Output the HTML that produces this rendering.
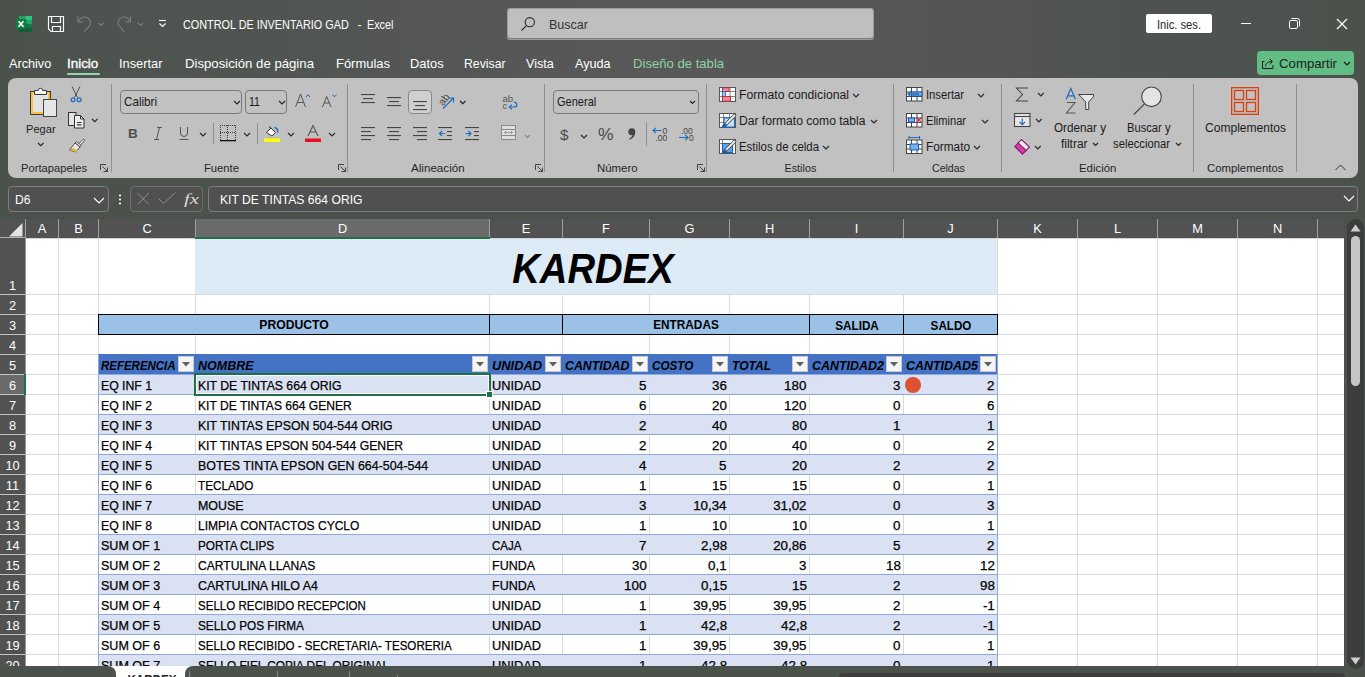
<!DOCTYPE html>
<html><head><meta charset="utf-8"><style>
html,body{margin:0;padding:0;width:1365px;height:677px;overflow:hidden;background:#4b524c;font-family:"Liberation Sans", sans-serif;}
.r{position:absolute;}
.t{position:absolute;line-height:1;white-space:pre;font-family:"Liberation Sans", sans-serif;}
svg{overflow:visible}
</style></head><body>
<div class="r" style="left:0px;top:0px;width:1365px;height:178px;background:linear-gradient(90deg,#4b524c 0%,#525653 25%,#585858 45%,#575757 60%,#4e534f 85%,#4b524c 100%);"></div><svg class="r" style="left:15px;top:15px" width="18" height="18" viewBox="0 0 18 18">
<rect x="4" y="1" width="6.5" height="4" fill="#21a366"/><rect x="10.5" y="1" width="6.5" height="4" fill="#33c481"/>
<rect x="4" y="5" width="13" height="4" fill="#21a366"/><rect x="4" y="9" width="13" height="4" fill="#107c41"/><rect x="4" y="13" width="13" height="4" fill="#185c37"/>
<rect x="1.5" y="4.5" width="10" height="10" fill="#0c5a2f" opacity="0.6"/>
<rect x="1" y="4" width="10" height="10" fill="#107c41"/>
<path d="M3.5 6.3l5 5.4M8.5 6.3l-5 5.4" stroke="#fff" stroke-width="1.6"/>
</svg><svg class="r" style="left:47px;top:15px" width="18" height="18" viewBox="0 0 18 18" fill="none" stroke="#fff" stroke-width="1.15">
<path d="M1.5 1.5H16.5V16.5H4L1.5 14z"/><path d="M4.5 1.5V7.5H13.5V1.5"/><path d="M5.5 16.5V11.5H13.5V16.5"/>
</svg><svg class="r" style="left:76px;top:15px" width="72" height="18" viewBox="0 0 72 18" fill="none" stroke="#7b807c" stroke-width="1.1">
<path d="M2 1.5v5.5h5.5"/><path d="M2.3 6.6C4 3 7 1.5 10 2.2c3.5 0.8 5.5 4.5 4 8L8 17"/>
<path d="M22.5 8l2.5 2.5 2.5-2.5"/>
<path d="M54.5 1.5v5.5h-5.5"/><path d="M54.2 6.6C52.5 3 49.5 1.5 46.5 2.2c-3.5 0.8-5.5 4.5-4 8L48.5 17"/>
<path d="M62 8l2.5 2.5 2.5-2.5"/>
</svg><svg class="r" style="left:158px;top:19px" width="10" height="9" viewBox="0 0 10 9" fill="none" stroke="#fff" stroke-width="1.1">
<path d="M1 1.5h7"/><path d="M1.5 4.5l3 3 3-3"/></svg><div class="t" style="left:183.30px;top:19.00px;font-size:12.2px;color:#fff;transform:scaleX(0.8905);transform-origin:0 0;">CONTROL DE INVENTARIO GAD</div><div class="t" style="left:357.50px;top:19.00px;font-size:12.2px;color:#fff;">-</div><div class="t" style="left:367.00px;top:19.00px;font-size:12.2px;color:#fff;transform:scaleX(0.8816);transform-origin:0 0;">Excel</div><div class="r" style="left:507px;top:8px;width:367px;height:32px;background:#bfbfbf;border-radius:4px;box-shadow:inset 0 0 0 1px #9c9c9c, inset 0 -1px 0 1px #7e7e7e;"></div><svg class="r" style="left:520px;top:16px" width="16" height="16" viewBox="0 0 16 16" fill="none" stroke="#2b2b2b" stroke-width="1.1">
<circle cx="9.8" cy="6.2" r="4.6"/><path d="M6.4 9.6L1.5 14.5"/></svg><div class="t" style="left:549.00px;top:19.00px;font-size:12.8px;color:#333;transform:scaleX(0.9790);transform-origin:0 0;">Buscar</div><div class="r" style="left:1146px;top:14px;width:66px;height:19px;background:#fff;border-radius:2px;"></div><div class="t" style="left:1179.00px;top:19.00px;font-size:12.2px;color:#1f1f1f;transform:translateX(-50%) scaleX(0.9140);transform-origin:50% 0;">Inic. ses.</div><svg class="r" style="left:1230px;top:10px" width="130" height="28" viewBox="0 0 130 28" fill="none" stroke="#fff" stroke-width="1">
<path d="M11 13.5h10"/>
<rect x="59.5" y="10.5" width="8" height="8" rx="1.3"/><path d="M61.5 8.5h5.8a2.2 2.2 0 0 1 2.2 2.2v5.8"/>
<path d="M107 9l10 10M117 9l-10 10" stroke-width="1.15"/>
</svg><div class="t" style="left:9.20px;top:58.00px;font-size:12.8px;color:#fff;transform:scaleX(0.9887);transform-origin:0 0;">Archivo</div><div class="t" style="left:67.30px;top:58.00px;font-size:12.8px;color:#fff;transform:scaleX(1.0475);transform-origin:0 0;-webkit-text-stroke:0.35px #fff;">Inicio</div><div class="t" style="left:119.30px;top:58.00px;font-size:12.8px;color:#fff;transform:scaleX(1.0024);transform-origin:0 0;">Insertar</div><div class="t" style="left:185.30px;top:58.00px;font-size:12.8px;color:#fff;transform:scaleX(1.0300);transform-origin:0 0;">Disposición de página</div><div class="t" style="left:336.00px;top:58.00px;font-size:12.8px;color:#fff;transform:scaleX(1.0123);transform-origin:0 0;">Fórmulas</div><div class="t" style="left:410.00px;top:58.00px;font-size:12.8px;color:#fff;transform:scaleX(1.0049);transform-origin:0 0;">Datos</div><div class="t" style="left:464.30px;top:58.00px;font-size:12.8px;color:#fff;transform:scaleX(0.9588);transform-origin:0 0;">Revisar</div><div class="t" style="left:525.80px;top:58.00px;font-size:12.8px;color:#fff;transform:scaleX(0.9885);transform-origin:0 0;">Vista</div><div class="t" style="left:575.00px;top:58.00px;font-size:12.8px;color:#fff;transform:scaleX(0.9844);transform-origin:0 0;">Ayuda</div><div class="t" style="left:633.40px;top:58.00px;font-size:12.8px;color:#8fd3a9;transform:scaleX(1.0242);transform-origin:0 0;">Diseño de tabla</div><div class="r" style="left:67px;top:73px;width:33px;height:2px;background:#93d6ae;border-radius:1px;"></div><div class="r" style="left:1257px;top:51px;width:97px;height:24px;background:#61bd84;border-radius:4px;"></div><svg class="r" style="left:1261px;top:56px" width="14" height="14" viewBox="0 0 14 14" fill="none" stroke="#1c1c1c" stroke-width="1">
<path d="M3.5 5.5h-2v7h10.5V9"/><path d="M4.5 10.5c0-3.2 2.5-5 6.5-5"/><path d="M8.7 2.8l2.7 2.7-2.7 2.7"/></svg><div class="t" style="left:1278.60px;top:58.00px;font-size:12.8px;color:#1c1c1c;transform:scaleX(1.0322);transform-origin:0 0;">Compartir</div><svg class="r" style="left:1343px;top:61px" width="8" height="5.0" viewBox="0 0 8 5.0" fill="none" stroke="#1c1c1c" stroke-width="1.2"><path d="M1 1l3.0 3.0 3.0 -3.0"/></svg><div class="r" style="left:8px;top:78px;width:1350px;height:100px;background:#c1c1c1;border-radius:8px;"></div><div class="r" style="left:111px;top:84px;width:1px;height:88px;background:#8f8f8f;"></div><div class="r" style="left:347px;top:84px;width:1px;height:88px;background:#8f8f8f;"></div><div class="r" style="left:544px;top:84px;width:1px;height:88px;background:#8f8f8f;"></div><div class="r" style="left:706px;top:84px;width:1px;height:88px;background:#8f8f8f;"></div><div class="r" style="left:893px;top:84px;width:1px;height:88px;background:#8f8f8f;"></div><div class="r" style="left:1001px;top:84px;width:1px;height:88px;background:#8f8f8f;"></div><div class="r" style="left:1193px;top:84px;width:1px;height:88px;background:#8f8f8f;"></div><div class="r" style="left:1296px;top:84px;width:1px;height:88px;background:#8f8f8f;"></div><div class="t" style="left:20.50px;top:163.00px;font-size:10.8px;color:#262626;transform:scaleX(1.0370);transform-origin:0 0;">Portapapeles</div><div class="t" style="left:204.00px;top:163.00px;font-size:10.8px;color:#262626;transform:scaleX(1.0409);transform-origin:0 0;">Fuente</div><div class="t" style="left:411.00px;top:163.00px;font-size:10.8px;color:#262626;transform:scaleX(1.0776);transform-origin:0 0;">Alineación</div><div class="t" style="left:597.00px;top:163.00px;font-size:10.8px;color:#262626;transform:scaleX(1.0570);transform-origin:0 0;">Número</div><div class="t" style="left:784.50px;top:163.00px;font-size:10.8px;color:#262626;">Estilos</div><div class="t" style="left:931.70px;top:163.00px;font-size:10.8px;color:#262626;transform:scaleX(0.9786);transform-origin:0 0;">Celdas</div><div class="t" style="left:1079.40px;top:163.00px;font-size:10.8px;color:#262626;transform:scaleX(1.0558);transform-origin:0 0;">Edición</div><div class="t" style="left:1207.00px;top:163.00px;font-size:10.8px;color:#262626;transform:scaleX(1.0519);transform-origin:0 0;">Complementos</div><svg class="r" style="left:100px;top:164px" width="8" height="8" viewBox="0 0 8 8" fill="none" stroke="#333" stroke-width="0.9"><path d="M0.5 6V0.5H6"/><path d="M2.5 2.5l5 5M7.5 3.5v4h-4"/></svg><svg class="r" style="left:338px;top:164px" width="8" height="8" viewBox="0 0 8 8" fill="none" stroke="#333" stroke-width="0.9"><path d="M0.5 6V0.5H6"/><path d="M2.5 2.5l5 5M7.5 3.5v4h-4"/></svg><svg class="r" style="left:535px;top:164px" width="8" height="8" viewBox="0 0 8 8" fill="none" stroke="#333" stroke-width="0.9"><path d="M0.5 6V0.5H6"/><path d="M2.5 2.5l5 5M7.5 3.5v4h-4"/></svg><svg class="r" style="left:697px;top:164px" width="8" height="8" viewBox="0 0 8 8" fill="none" stroke="#333" stroke-width="0.9"><path d="M0.5 6V0.5H6"/><path d="M2.5 2.5l5 5M7.5 3.5v4h-4"/></svg><svg class="r" style="left:29px;top:86px" width="30" height="32" viewBox="0 0 30 32">
<rect x="1.5" y="5.5" width="20" height="23" fill="#f5c242" stroke="#3a3a3a" stroke-width="1"/>
<rect x="4" y="8" width="15" height="18" fill="#e2e2e2"/>
<path d="M5.5 4.5h3.8a2.2 2.2 0 0 1 4.4 0h3.8v4h-12z" fill="#fff" stroke="#3a3a3a" stroke-width="1"/>
<rect x="14.5" y="13.5" width="13" height="17" fill="#e6e6e6" stroke="#444" stroke-width="1"/>
</svg><div class="t" style="left:26.40px;top:124.00px;font-size:11.3px;color:#222;transform:scaleX(0.9816);transform-origin:0 0;">Pegar</div><svg class="r" style="left:36.7px;top:142px" width="7.5" height="4.75" viewBox="0 0 7.5 4.75" fill="none" stroke="#2b2b2b" stroke-width="1.2"><path d="M1 1l2.75 2.75 2.75 -2.75"/></svg><svg class="r" style="left:68px;top:85px" width="16" height="18" viewBox="0 0 16 18" fill="none">
<path d="M4 1.5l5.5 11M12 1.5L6.5 12.5" stroke="#505050" stroke-width="1"/>
<circle cx="5.1" cy="14.8" r="1.9" stroke="#1d6bc0" stroke-width="1.2"/><circle cx="11.1" cy="14.8" r="1.9" stroke="#1d6bc0" stroke-width="1.2"/>
</svg><svg class="r" style="left:67px;top:111px" width="18" height="18" viewBox="0 0 18 18" fill="none" stroke="#333" stroke-width="1">
<rect x="1.5" y="1.5" width="7.5" height="13" fill="#e4e4e4"/><path d="M7.5 4.5h6l3.5 3.5v9h-9.5z" fill="#eeeeee"/><path d="M13.5 4.5v3.5h3.5"/><path d="M10 11.5h4.5M10 13.8h4.5" stroke-width="1.2"/>
</svg><svg class="r" style="left:90.8px;top:118px" width="7.5" height="4.75" viewBox="0 0 7.5 4.75" fill="none" stroke="#2b2b2b" stroke-width="1.2"><path d="M1 1l2.75 2.75 2.75 -2.75"/></svg><svg class="r" style="left:68px;top:137px" width="18" height="18" viewBox="0 0 18 18" fill="none">
<path d="M11 6.5l4.2-4.2a1 1 0 0 1 1.4 1.4L12.4 8" stroke="#444" stroke-width="0.9" fill="#eee"/>
<path d="M8.5 4.5l5 4-1.5 1.5-5-4z" fill="#ddd" stroke="#444" stroke-width="0.9"/>
<path d="M7 6l5 4-4.5 5L1.5 13z" fill="#e8e8e8" stroke="#444" stroke-width="0.9"/>
<path d="M1.5 13l2.5-2 6.3 2.2L7.5 15z" fill="#e3b23c"/>
</svg><div class="r" style="left:120px;top:90px;width:122px;height:24px;border:1px solid #7a7a7a;border-radius:4px;box-sizing:border-box;"></div><div class="t" style="left:123.50px;top:96.00px;font-size:12.8px;color:#1a1a1a;transform:scaleX(0.9097);transform-origin:0 0;">Calibri</div><svg class="r" style="left:233px;top:100px" width="8" height="5.0" viewBox="0 0 8 5.0" fill="none" stroke="#222" stroke-width="1.1"><path d="M1 1l3.0 3.0 3.0 -3.0"/></svg><div class="r" style="left:245px;top:90px;width:42px;height:24px;border:1px solid #7a7a7a;border-radius:4px;box-sizing:border-box;"></div><div class="t" style="left:249.00px;top:96.00px;font-size:12.8px;color:#1a1a1a;transform:scaleX(0.8278);transform-origin:0 0;">11</div><svg class="r" style="left:278px;top:100px" width="8" height="5.0" viewBox="0 0 8 5.0" fill="none" stroke="#222" stroke-width="1.1"><path d="M1 1l3.0 3.0 3.0 -3.0"/></svg><svg class="r" style="left:294px;top:92px" width="46" height="18" viewBox="0 0 46 18" fill="none" stroke-width="1">
<path d="M1.5 15L6.5 2 11.5 15M3.3 10.5h6.4" stroke="#555"/><path d="M12 5l2-2.3 2 2.3" stroke="#1d6bc0"/>
<path d="M28.5 15l4.2-10.5 4.2 10.5M30 11h5.4" stroke="#555"/><path d="M38.5 2.5l2 2.3 2-2.3" stroke="#1d6bc0"/>
</svg><div class="t" style="left:128.00px;top:127.00px;font-size:13.5px;font-weight:bold;color:#505050;">B</div><svg class="r" style="left:153px;top:127px" width="10" height="13" viewBox="0 0 10 13" fill="none" stroke="#555" stroke-width="1"><path d="M4 0.5h5M1 12.5h5M6.5 0.5L3.5 12.5"/></svg><svg class="r" style="left:178px;top:126px" width="12" height="15" viewBox="0 0 12 15" fill="none" stroke="#555" stroke-width="1">
<path d="M2.5 1v6a3.5 3.5 0 0 0 7 0V1"/><path d="M1.5 13.5h9"/></svg><svg class="r" style="left:198.5px;top:131.5px" width="8" height="5.0" viewBox="0 0 8 5.0" fill="none" stroke="#2b2b2b" stroke-width="1.2"><path d="M1 1l3.0 3.0 3.0 -3.0"/></svg><div class="r" style="left:213px;top:123px;width:1px;height:21px;background:#8f8f8f;"></div><svg class="r" style="left:220px;top:125px" width="16" height="17" viewBox="0 0 16 17"><g fill="#3a3a3a"><rect x="0" y="0" width="1" height="1"/><rect x="0" y="7" width="1" height="1"/><rect x="2" y="0" width="1" height="1"/><rect x="2" y="7" width="1" height="1"/><rect x="4" y="0" width="1" height="1"/><rect x="4" y="7" width="1" height="1"/><rect x="6" y="0" width="1" height="1"/><rect x="6" y="7" width="1" height="1"/><rect x="8" y="0" width="1" height="1"/><rect x="8" y="7" width="1" height="1"/><rect x="10" y="0" width="1" height="1"/><rect x="10" y="7" width="1" height="1"/><rect x="12" y="0" width="1" height="1"/><rect x="12" y="7" width="1" height="1"/><rect x="14" y="0" width="1" height="1"/><rect x="14" y="7" width="1" height="1"/><rect x="0" y="0" width="1" height="1"/><rect x="15" y="0" width="1" height="1"/><rect x="7" y="0" width="1" height="1"/><rect x="0" y="2" width="1" height="1"/><rect x="15" y="2" width="1" height="1"/><rect x="7" y="2" width="1" height="1"/><rect x="0" y="4" width="1" height="1"/><rect x="15" y="4" width="1" height="1"/><rect x="7" y="4" width="1" height="1"/><rect x="0" y="6" width="1" height="1"/><rect x="15" y="6" width="1" height="1"/><rect x="7" y="6" width="1" height="1"/><rect x="0" y="8" width="1" height="1"/><rect x="15" y="8" width="1" height="1"/><rect x="7" y="8" width="1" height="1"/><rect x="0" y="10" width="1" height="1"/><rect x="15" y="10" width="1" height="1"/><rect x="7" y="10" width="1" height="1"/><rect x="0" y="12" width="1" height="1"/><rect x="15" y="12" width="1" height="1"/><rect x="7" y="12" width="1" height="1"/><rect x="0" y="14" width="1" height="1"/><rect x="15" y="14" width="1" height="1"/><rect x="7" y="14" width="1" height="1"/></g><rect x="0" y="15" width="16" height="1.3" fill="#111"/></svg><svg class="r" style="left:242.5px;top:131.5px" width="8" height="5.0" viewBox="0 0 8 5.0" fill="none" stroke="#2b2b2b" stroke-width="1.2"><path d="M1 1l3.0 3.0 3.0 -3.0"/></svg><div class="r" style="left:257px;top:123px;width:1px;height:21px;background:#8f8f8f;"></div><svg class="r" style="left:264px;top:124px" width="16" height="18" viewBox="0 0 16 18">
<path d="M2.5 8.5L7 4l4.5 4.5L8 12z" fill="#fff" stroke="#333" stroke-width="1"/><path d="M5 2.5l2 1.5" stroke="#333"/><path d="M10.5 3.5c2.5 0.5 3.5 2.5 3.2 5" fill="none" stroke="#1d6bc0" stroke-width="1.3"/>
<rect x="0" y="14.5" width="16" height="3.5" fill="#ffff00"/></svg><svg class="r" style="left:286.5px;top:131.5px" width="8" height="5.0" viewBox="0 0 8 5.0" fill="none" stroke="#2b2b2b" stroke-width="1.2"><path d="M1 1l3.0 3.0 3.0 -3.0"/></svg><svg class="r" style="left:305px;top:124px" width="16" height="18" viewBox="0 0 16 18">
<path d="M3 12L8 1.5 13 12M5 8h6" fill="none" stroke="#555" stroke-width="1.1"/>
<rect x="0" y="14.5" width="16" height="3.5" fill="#e81123"/></svg><svg class="r" style="left:327.5px;top:131.5px" width="8" height="5.0" viewBox="0 0 8 5.0" fill="none" stroke="#2b2b2b" stroke-width="1.2"><path d="M1 1l3.0 3.0 3.0 -3.0"/></svg><div class="r" style="left:408px;top:90px;width:24px;height:24px;background:#cfcfcf;border:1px solid #8a8a8a;border-radius:4px;box-sizing:border-box;"></div><svg class="r" style="left:355px;top:85px" width="200" height="70" viewBox="0 0 200 70"><rect x="6" y="9" width="14" height="1.1" fill="#444"/><rect x="8" y="13" width="10" height="1.1" fill="#444"/><rect x="6" y="17" width="14" height="1.1" fill="#444"/><rect x="32" y="12" width="14" height="1.1" fill="#444"/><rect x="34" y="16" width="10" height="1.1" fill="#444"/><rect x="32" y="20" width="14" height="1.1" fill="#444"/><rect x="58" y="16" width="14" height="1.1" fill="#444"/><rect x="60" y="20" width="10" height="1.1" fill="#444"/><rect x="58" y="24" width="14" height="1.1" fill="#444"/><rect x="6" y="42" width="14" height="1.1" fill="#444"/><rect x="6" y="46" width="10" height="1.1" fill="#444"/><rect x="6" y="50" width="14" height="1.1" fill="#444"/><rect x="6" y="54" width="10" height="1.1" fill="#444"/><rect x="32" y="42" width="14" height="1.1" fill="#444"/><rect x="34" y="46" width="10" height="1.1" fill="#444"/><rect x="32" y="50" width="14" height="1.1" fill="#444"/><rect x="34" y="54" width="10" height="1.1" fill="#444"/><rect x="58" y="42" width="14" height="1.1" fill="#444"/><rect x="62" y="46" width="10" height="1.1" fill="#444"/><rect x="58" y="50" width="14" height="1.1" fill="#444"/><rect x="62" y="54" width="10" height="1.1" fill="#444"/><rect x="83" y="42" width="14" height="1.1" fill="#444"/><rect x="92" y="46" width="5" height="1.1" fill="#444"/><rect x="92" y="50" width="5" height="1.1" fill="#444"/><rect x="83" y="54" width="14" height="1.1" fill="#444"/><path d="M90 48.5h-5.5M87 46l-2.5 2.5 2.5 2.5" fill="none" stroke="#1d6bc0" stroke-width="1.2"/><rect x="110" y="42" width="14" height="1.1" fill="#444"/><rect x="119" y="46" width="5" height="1.1" fill="#444"/><rect x="119" y="50" width="5" height="1.1" fill="#444"/><rect x="110" y="54" width="14" height="1.1" fill="#444"/><path d="M110.5 48.5h5.5M113.5 46l2.5 2.5-2.5 2.5" fill="none" stroke="#1d6bc0" stroke-width="1.2"/><text x="82.5" y="18" font-family="Liberation Sans" font-size="10.5" fill="#4a4a4a" transform="rotate(-55 88.5 14)">ab</text><path d="M88 23.5l10.5-10.5M94 13h4.5v4.5" fill="none" stroke="#1d6bc0" stroke-width="1.1"/></svg><svg class="r" style="left:458.5px;top:100px" width="7.5" height="4.75" viewBox="0 0 7.5 4.75" fill="none" stroke="#222" stroke-width="1.2"><path d="M1 1l2.75 2.75 2.75 -2.75"/></svg><svg class="r" style="left:502px;top:93px" width="18" height="18" viewBox="0 0 18 18">
<text x="0.5" y="8.5" font-family="Liberation Sans" font-size="9.5" fill="#555">ab</text><text x="0.5" y="15.5" font-family="Liberation Sans" font-size="9.5" fill="#555">c</text>
<path d="M7.5 14h5a2.3 2.3 0 0 0 0-4.6h-0.5" fill="none" stroke="#1d6bc0" stroke-width="1.2"/><path d="M9.8 11.7L7.5 14l2.3 2.3" fill="none" stroke="#1d6bc0" stroke-width="1.2"/></svg><svg class="r" style="left:501px;top:125px" width="16" height="16" viewBox="0 0 16 16" fill="none" stroke="#8a8a8a" stroke-width="1">
<rect x="0.5" y="0.5" width="14" height="14" fill="#dedede"/><path d="M0.5 4.5h14M0.5 10.5h14"/><path d="M3.5 7.5h8M5 6l-1.5 1.5 1.5 1.5M10 6l1.5 1.5-1.5 1.5" stroke="#9a9a9a"/></svg><svg class="r" style="left:524px;top:134px" width="7" height="4.5" viewBox="0 0 7 4.5" fill="none" stroke="#8a8a8a" stroke-width="1.2"><path d="M1 1l2.5 2.5 2.5 -2.5"/></svg><div class="r" style="left:553px;top:90px;width:146px;height:24px;border:1px solid #7a7a7a;border-radius:4px;box-sizing:border-box;"></div><div class="t" style="left:556.50px;top:96.00px;font-size:12.8px;color:#1a1a1a;transform:scaleX(0.8630);transform-origin:0 0;">General</div><svg class="r" style="left:689px;top:100px" width="7" height="4.5" viewBox="0 0 7 4.5" fill="none" stroke="#222" stroke-width="1.1"><path d="M1 1l2.5 2.5 2.5 -2.5"/></svg><div class="t" style="left:559.50px;top:127.00px;font-size:15.5px;color:#484848;transform:scaleX(0.9860);transform-origin:0 0;">$</div><div class="t" style="left:598.00px;top:126.00px;font-size:17px;color:#484848;transform:scaleX(1.0254);transform-origin:0 0;">%</div><svg class="r" style="left:580px;top:134px" width="8" height="5.0" viewBox="0 0 8 5.0" fill="none" stroke="#2b2b2b" stroke-width="1.2"><path d="M1 1l3.0 3.0 3.0 -3.0"/></svg><svg class="r" style="left:627px;top:128px" width="9" height="12" viewBox="0 0 9 12"><circle cx="4.8" cy="3.8" r="3.5" fill="#444"/><path d="M8.2 4.5C8 8 6 10.5 2.5 11.8L2 11C4.5 9.5 5.5 8 5.8 6z" fill="#444"/></svg><div class="r" style="left:646px;top:122px;width:1px;height:24px;background:#8f8f8f;"></div><svg class="r" style="left:652px;top:126px" width="44" height="16" viewBox="0 0 44 16">
<text x="10.5" y="7.5" font-family="Liberation Sans" font-size="8.5" fill="#444">0</text><text x="3.5" y="15" font-family="Liberation Sans" font-size="8.5" fill="#444">.00</text>
<path d="M1 4.5h8.5M3.8 1.8L1 4.5l2.8 2.7" fill="none" stroke="#1d6bc0" stroke-width="1.1"/>
<text x="29" y="7.5" font-family="Liberation Sans" font-size="8.5" fill="#444">.00</text><text x="37" y="15" font-family="Liberation Sans" font-size="8.5" fill="#444">0</text>
<path d="M27 11.5h9M33.2 8.8l2.8 2.7-2.8 2.7" fill="none" stroke="#1d6bc0" stroke-width="1.1"/>
</svg><svg class="r" style="left:719px;top:87px" width="17" height="68" viewBox="0 0 17 68" fill="none">
<rect x="0.5" y="0.5" width="16" height="14" fill="#fff" stroke="#555"/>
<path d="M3.5 0.5v14M11 0.5v14M0.5 4.5h16M0.5 9.5h16" stroke="#777" stroke-width="0.9"/>
<rect x="3.5" y="0.8" width="6.5" height="3.7" fill="#f08a96" stroke="#b8283a" stroke-width="0.9"/>
<rect x="3.5" y="4.5" width="3" height="5" fill="#9fd0f4" stroke="#1d6bc0" stroke-width="0.9"/>
<rect x="3.5" y="9.5" width="8" height="4.7" fill="#f08a96" stroke="#b8283a" stroke-width="0.9"/>
<rect x="0.5" y="26.5" width="16" height="14" fill="#fff" stroke="#555"/>
<path d="M0.5 30.5h16M0.5 35.5h16M4.5 26.5v14M10.5 26.5v14" stroke="#777" stroke-width="0.9"/>
<rect x="5" y="31" width="10.5" height="9" fill="#bfe0fa" stroke="#1d6bc0" stroke-width="1"/>
<path d="M15.5 28.5l-9 9" stroke="#444" stroke-width="3.4" stroke-linecap="round"/><path d="M15.5 28.5l-9 9" stroke="#eee" stroke-width="1.8" stroke-linecap="round"/>
<path d="M2.5 40.5c0.5-2.5 2-4 4.5-4l0.8 0.8c0 2.5-2 4-5.3 3.2z" fill="#1d5fb0"/>
<rect x="0.5" y="52.5" width="16" height="14" fill="#fff" stroke="#555"/>
<path d="M0.5 56.5h16M3.5 52.5v14" stroke="#777" stroke-width="0.9"/>
<rect x="3.5" y="56.5" width="10" height="9" fill="#5ea3e6" stroke="#1d5fb0" stroke-width="1"/>
<path d="M15.5 54.5l-9 9" stroke="#444" stroke-width="3.4" stroke-linecap="round"/><path d="M15.5 54.5l-9 9" stroke="#eee" stroke-width="1.8" stroke-linecap="round"/>
<path d="M2.5 66.5c0.5-2.5 2-4 4.5-4l0.8 0.8c0 2.5-2 4-5.3 3.2z" fill="#1d5fb0"/>
</svg><div class="t" style="left:739.00px;top:89.00px;font-size:12px;color:#1a1a1a;transform:scaleX(1.0180);transform-origin:0 0;">Formato condicional</div><svg class="r" style="left:852px;top:93px" width="8" height="5.0" viewBox="0 0 8 5.0" fill="none" stroke="#2b2b2b" stroke-width="1.2"><path d="M1 1l3.0 3.0 3.0 -3.0"/></svg><div class="t" style="left:739.00px;top:115.00px;font-size:12px;color:#1a1a1a;transform:scaleX(1.0089);transform-origin:0 0;">Dar formato como tabla</div><svg class="r" style="left:870px;top:119px" width="8" height="5.0" viewBox="0 0 8 5.0" fill="none" stroke="#2b2b2b" stroke-width="1.2"><path d="M1 1l3.0 3.0 3.0 -3.0"/></svg><div class="t" style="left:739.00px;top:141.00px;font-size:12px;color:#1a1a1a;transform:scaleX(0.9518);transform-origin:0 0;">Estilos de celda</div><svg class="r" style="left:822px;top:145px" width="8" height="5.0" viewBox="0 0 8 5.0" fill="none" stroke="#2b2b2b" stroke-width="1.2"><path d="M1 1l3.0 3.0 3.0 -3.0"/></svg><svg class="r" style="left:906px;top:87px" width="17" height="68" viewBox="0 0 17 68" fill="none"><rect x="0.5" y="0.5" width="15.5" height="13.5" fill="#fff" stroke="#444"/><path d="M5.5 0.5v13.5M11 0.5v13.5M0.5 5.0h15.5M0.5 9.5h15.5" stroke="#444" stroke-width="1"/><rect x="5.5" y="5" width="10.5" height="4" fill="#75b2e8" stroke="#1d5fb0"/><path d="M13 7h-11M4.5 4.5L2 7l2.5 2.5" stroke="#1d6bc0" stroke-width="1.3"/><rect x="0.5" y="26.5" width="15.5" height="13.5" fill="#fff" stroke="#444"/><path d="M5.5 26.5v13.5M11 26.5v13.5M0.5 31.0h15.5M0.5 35.5h15.5" stroke="#444" stroke-width="1"/><rect x="2.5" y="31" width="6" height="4" fill="#75b2e8" stroke="#1d5fb0"/><path d="M10.5 30.5l5 5M15.5 30.5l-5 5" stroke="#d03040" stroke-width="1.2"/><rect x="0.5" y="53" width="15.5" height="13.5" fill="#fff" stroke="#444"/><path d="M5.5 53v13.5M11 53v13.5M0.5 57.5h15.5M0.5 62h15.5" stroke="#444" stroke-width="1"/><rect x="4" y="57" width="8.5" height="6" fill="#75b2e8" stroke="#1d5fb0"/><path d="M3 50.5h10.5M3 49v3M13.5 49v3" stroke="#1d6bc0" stroke-width="1.1"/></svg><div class="t" style="left:926.00px;top:89.00px;font-size:12px;color:#1a1a1a;transform:scaleX(0.9341);transform-origin:0 0;">Insertar</div><svg class="r" style="left:977px;top:93px" width="8" height="5.0" viewBox="0 0 8 5.0" fill="none" stroke="#2b2b2b" stroke-width="1.2"><path d="M1 1l3.0 3.0 3.0 -3.0"/></svg><div class="t" style="left:926.00px;top:115.00px;font-size:12px;color:#1a1a1a;transform:scaleX(0.9229);transform-origin:0 0;">Eliminar</div><svg class="r" style="left:981px;top:119px" width="8" height="5.0" viewBox="0 0 8 5.0" fill="none" stroke="#2b2b2b" stroke-width="1.2"><path d="M1 1l3.0 3.0 3.0 -3.0"/></svg><div class="t" style="left:926.00px;top:141.00px;font-size:12px;color:#1a1a1a;transform:scaleX(0.9848);transform-origin:0 0;">Formato</div><svg class="r" style="left:973px;top:145px" width="8" height="5.0" viewBox="0 0 8 5.0" fill="none" stroke="#2b2b2b" stroke-width="1.2"><path d="M1 1l3.0 3.0 3.0 -3.0"/></svg><svg class="r" style="left:1014px;top:87px" width="17" height="68" viewBox="0 0 17 68" fill="none" stroke="#555" stroke-width="1.1">
<path d="M14 1H2.5l6 6.5-6 6.5H14" stroke="#444"/>
<rect x="0.5" y="26.5" width="15.5" height="13" fill="#e6e6e6" stroke="#444"/><path d="M0.5 29.5h15.5" stroke="#444"/><path d="M8.25 31.5v6M5.5 35l2.75 2.75L11 35" stroke="#1d6bc0" stroke-width="1.2"/>
<path d="M1 59.5l6.5-7 8 7.5-7 7z" fill="#ececec" stroke="#8c1f6e"/><path d="M1 59.5l3.2-3.5 8 7.5-3.7 3.5z" fill="#d63fa7" stroke="#8c1f6e"/>
</svg><svg class="r" style="left:1036.5px;top:92.3px" width="7.7" height="4.85" viewBox="0 0 7.7 4.85" fill="none" stroke="#2b2b2b" stroke-width="1.2"><path d="M1 1l2.85 2.85 2.85 -2.85"/></svg><svg class="r" style="left:1035px;top:118px" width="7.7" height="4.85" viewBox="0 0 7.7 4.85" fill="none" stroke="#2b2b2b" stroke-width="1.2"><path d="M1 1l2.85 2.85 2.85 -2.85"/></svg><svg class="r" style="left:1034px;top:144.5px" width="7.7" height="4.85" viewBox="0 0 7.7 4.85" fill="none" stroke="#2b2b2b" stroke-width="1.2"><path d="M1 1l2.85 2.85 2.85 -2.85"/></svg><svg class="r" style="left:1065px;top:88px" width="30" height="27" viewBox="0 0 30 27">
<path d="M1.2 11.3L5.8 0.5l4.6 10.8M2.6 7.8h6.4" fill="none" stroke="#1d6bc0" stroke-width="1.2"/>
<path d="M2 14.5h8l-8.5 10.5h9" fill="none" stroke="#555" stroke-width="1.1"/>
<path d="M13.5 6.5h15v2.2l-4.8 5.3v7.5h-3v-7.5l-4.7-5.3z" fill="#e8e8e8" stroke="#444" stroke-width="1"/>
</svg><div class="t" style="left:1054.00px;top:122.00px;font-size:12px;color:#1a1a1a;transform:scaleX(0.9746);transform-origin:0 0;">Ordenar y</div><div class="t" style="left:1061.00px;top:138.00px;font-size:12px;color:#1a1a1a;transform:scaleX(0.9938);transform-origin:0 0;">filtrar</div><svg class="r" style="left:1092px;top:142px" width="7" height="4.5" viewBox="0 0 7 4.5" fill="none" stroke="#2b2b2b" stroke-width="1.2"><path d="M1 1l2.5 2.5 2.5 -2.5"/></svg><svg class="r" style="left:1133px;top:86px" width="30" height="30" viewBox="0 0 30 30">
<circle cx="18.5" cy="10.8" r="9.8" fill="#e4e4e4" stroke="#444" stroke-width="1.1"/><path d="M11.5 17.8L0.8 28.5" stroke="#444" stroke-width="1.1"/></svg><div class="t" style="left:1126.50px;top:122.00px;font-size:12px;color:#1a1a1a;transform:scaleX(0.9318);transform-origin:0 0;">Buscar y</div><div class="t" style="left:1113.00px;top:138.00px;font-size:12px;color:#1a1a1a;transform:scaleX(0.9391);transform-origin:0 0;">seleccionar</div><svg class="r" style="left:1175px;top:142px" width="7" height="4.5" viewBox="0 0 7 4.5" fill="none" stroke="#2b2b2b" stroke-width="1.2"><path d="M1 1l2.5 2.5 2.5 -2.5"/></svg><svg class="r" style="left:1231px;top:87px" width="28" height="28" viewBox="0 0 28 28" fill="none" stroke="#dc3f0c" stroke-width="1.3">
<rect x="0.65" y="0.65" width="26.7" height="26.7"/><rect x="3.5" y="3.5" width="9" height="9"/><rect x="15.5" y="3.5" width="9" height="9"/><rect x="3.5" y="15.5" width="9" height="9"/><rect x="15.5" y="15.5" width="9" height="9"/></svg><div class="t" style="left:1204.50px;top:122.00px;font-size:12px;color:#1a1a1a;transform:scaleX(1.0037);transform-origin:0 0;">Complementos</div><svg class="r" style="left:1335px;top:164px" width="11" height="7" viewBox="0 0 11 7" fill="none" stroke="#333" stroke-width="1"><path d="M0.5 6l5-5 5 5"/></svg><div class="r" style="left:8px;top:186px;width:101px;height:26px;background:#505050;border:1px solid #7d7d7d;border-radius:4px;box-sizing:border-box;"></div><div class="t" style="left:15.20px;top:194.00px;font-size:12.8px;color:#fff;transform:scaleX(0.9473);transform-origin:0 0;">D6</div><svg class="r" style="left:93px;top:197px" width="12" height="7.0" viewBox="0 0 12 7.0" fill="none" stroke="#fff" stroke-width="1.1"><path d="M1 1l5.0 5.0 5.0 -5.0"/></svg><svg class="r" style="left:118px;top:194px" width="4" height="13" viewBox="0 0 4 13" fill="#fff"><circle cx="2" cy="1.5" r="1.1"/><circle cx="2" cy="5.5" r="1.1"/><circle cx="2" cy="9.5" r="1.1"/></svg><div class="r" style="left:130px;top:186px;width:73px;height:26px;background:#505050;border:1px solid #6e6e6e;border-radius:4px;box-sizing:border-box;"></div><svg class="r" style="left:136px;top:191px" width="42" height="16" viewBox="0 0 42 16" fill="none" stroke="#8c8c8c" stroke-width="1">
<path d="M1.5 2l11.5 11.5M13 2L1.5 13.5"/><path d="M22.5 7.5l5 5 12-11"/></svg><div class="t" style="left:184.00px;top:191.00px;font-size:15.5px;font-style:italic;font-family:'Liberation Serif',serif;color:#d8d8d8;transform:scaleX(1.3410);transform-origin:0 0;">fx</div><div class="r" style="left:208px;top:186px;width:1150px;height:26px;background:#505050;border:1px solid #7d7d7d;border-radius:4px;box-sizing:border-box;"></div><div class="t" style="left:220.40px;top:194.00px;font-size:12.8px;color:#fff;transform:scaleX(0.9501);transform-origin:0 0;">KIT DE TINTAS 664 ORIG</div><svg class="r" style="left:1342.5px;top:194.5px" width="12" height="7.0" viewBox="0 0 12 7.0" fill="none" stroke="#fff" stroke-width="1.1"><path d="M1 1l5.0 5.0 5.0 -5.0"/></svg><div class="r" style="left:0px;top:219px;width:1344px;height:19px;background:#525252;"></div><div class="r" style="left:195px;top:219px;width:294px;height:19px;background:#6b6b6b;"></div><div class="r" style="left:26px;top:238px;width:1318px;height:1px;background:#d4d4d4;"></div><svg class="r" style="left:9px;top:223px" width="14" height="14" viewBox="0 0 14 14"><path d="M13.5 0V13.5H0z" fill="#e4e4e4"/></svg><div class="r" style="left:0px;top:237px;width:25px;height:1px;background:#b0b0b0;"></div><div class="r" style="left:58px;top:219px;width:1px;height:19px;background:#a0a0a0;"></div><div class="r" style="left:98px;top:219px;width:1px;height:19px;background:#a0a0a0;"></div><div class="r" style="left:195px;top:219px;width:1px;height:19px;background:#a0a0a0;"></div><div class="r" style="left:489px;top:219px;width:1px;height:19px;background:#a0a0a0;"></div><div class="r" style="left:562px;top:219px;width:1px;height:19px;background:#a0a0a0;"></div><div class="r" style="left:649px;top:219px;width:1px;height:19px;background:#a0a0a0;"></div><div class="r" style="left:729px;top:219px;width:1px;height:19px;background:#a0a0a0;"></div><div class="r" style="left:809px;top:219px;width:1px;height:19px;background:#a0a0a0;"></div><div class="r" style="left:903px;top:219px;width:1px;height:19px;background:#a0a0a0;"></div><div class="r" style="left:997px;top:219px;width:1px;height:19px;background:#a0a0a0;"></div><div class="r" style="left:1077px;top:219px;width:1px;height:19px;background:#a0a0a0;"></div><div class="r" style="left:1157px;top:219px;width:1px;height:19px;background:#a0a0a0;"></div><div class="r" style="left:1237px;top:219px;width:1px;height:19px;background:#a0a0a0;"></div><div class="r" style="left:1317px;top:219px;width:1px;height:19px;background:#a0a0a0;"></div><div class="r" style="left:25px;top:219px;width:1px;height:19px;background:#a0a0a0;"></div><div class="t" style="left:42.00px;top:223.00px;font-size:12.8px;color:#fff;transform:translateX(-50%) scaleX(1.0000);transform-origin:50% 0;">A</div><div class="t" style="left:78.50px;top:223.00px;font-size:12.8px;color:#fff;transform:translateX(-50%) scaleX(1.0000);transform-origin:50% 0;">B</div><div class="t" style="left:147.00px;top:223.00px;font-size:12.8px;color:#fff;transform:translateX(-50%) scaleX(1.0000);transform-origin:50% 0;">C</div><div class="t" style="left:342.50px;top:223.00px;font-size:12.8px;color:#fff;transform:translateX(-50%) scaleX(1.0000);transform-origin:50% 0;">D</div><div class="t" style="left:526.00px;top:223.00px;font-size:12.8px;color:#fff;transform:translateX(-50%) scaleX(1.0000);transform-origin:50% 0;">E</div><div class="t" style="left:606.00px;top:223.00px;font-size:12.8px;color:#fff;transform:translateX(-50%) scaleX(1.0000);transform-origin:50% 0;">F</div><div class="t" style="left:689.50px;top:223.00px;font-size:12.8px;color:#fff;transform:translateX(-50%) scaleX(1.0000);transform-origin:50% 0;">G</div><div class="t" style="left:769.50px;top:223.00px;font-size:12.8px;color:#fff;transform:translateX(-50%) scaleX(1.0000);transform-origin:50% 0;">H</div><div class="t" style="left:856.50px;top:223.00px;font-size:12.8px;color:#fff;transform:translateX(-50%) scaleX(1.0000);transform-origin:50% 0;">I</div><div class="t" style="left:950.50px;top:223.00px;font-size:12.8px;color:#fff;transform:translateX(-50%) scaleX(1.0000);transform-origin:50% 0;">J</div><div class="t" style="left:1037.50px;top:223.00px;font-size:12.8px;color:#fff;transform:translateX(-50%) scaleX(1.0000);transform-origin:50% 0;">K</div><div class="t" style="left:1117.50px;top:223.00px;font-size:12.8px;color:#fff;transform:translateX(-50%) scaleX(1.0000);transform-origin:50% 0;">L</div><div class="t" style="left:1197.50px;top:223.00px;font-size:12.8px;color:#fff;transform:translateX(-50%) scaleX(1.0000);transform-origin:50% 0;">M</div><div class="t" style="left:1277.50px;top:223.00px;font-size:12.8px;color:#fff;transform:translateX(-50%) scaleX(1.0000);transform-origin:50% 0;">N</div><div class="r" style="left:26px;top:239px;width:1318px;height:427px;background:#fff;"></div><div class="r" style="left:0px;top:238px;width:25px;height:428px;background:#525252;"></div><div class="r" style="left:25px;top:238px;width:1px;height:428px;background:#9a9a9a;"></div><div class="r" style="left:0px;top:375px;width:25px;height:19px;background:#6b6b6b;"></div><div class="r" style="left:0px;top:294px;width:25px;height:1px;background:#c4c4c4;"></div><div class="t" style="left:12.50px;top:280.00px;font-size:12.8px;color:#fff;transform:translateX(-50%) scaleX(1.0000);transform-origin:50% 0;">1</div><div class="r" style="left:0px;top:314px;width:25px;height:1px;background:#c4c4c4;"></div><div class="t" style="left:12.50px;top:300.00px;font-size:12.8px;color:#fff;transform:translateX(-50%) scaleX(1.0000);transform-origin:50% 0;">2</div><div class="r" style="left:0px;top:334px;width:25px;height:1px;background:#c4c4c4;"></div><div class="t" style="left:12.50px;top:320.00px;font-size:12.8px;color:#fff;transform:translateX(-50%) scaleX(1.0000);transform-origin:50% 0;">3</div><div class="r" style="left:0px;top:354px;width:25px;height:1px;background:#c4c4c4;"></div><div class="t" style="left:12.50px;top:340.00px;font-size:12.8px;color:#fff;transform:translateX(-50%) scaleX(1.0000);transform-origin:50% 0;">4</div><div class="r" style="left:0px;top:374px;width:25px;height:1px;background:#c4c4c4;"></div><div class="t" style="left:12.50px;top:360.00px;font-size:12.8px;color:#fff;transform:translateX(-50%) scaleX(1.0000);transform-origin:50% 0;">5</div><div class="r" style="left:0px;top:394px;width:25px;height:1px;background:#c4c4c4;"></div><div class="t" style="left:12.50px;top:380.00px;font-size:12.8px;color:#fff;transform:translateX(-50%) scaleX(1.0000);transform-origin:50% 0;">6</div><div class="r" style="left:0px;top:414px;width:25px;height:1px;background:#c4c4c4;"></div><div class="t" style="left:12.50px;top:400.00px;font-size:12.8px;color:#fff;transform:translateX(-50%) scaleX(1.0000);transform-origin:50% 0;">7</div><div class="r" style="left:0px;top:434px;width:25px;height:1px;background:#c4c4c4;"></div><div class="t" style="left:12.50px;top:420.00px;font-size:12.8px;color:#fff;transform:translateX(-50%) scaleX(1.0000);transform-origin:50% 0;">8</div><div class="r" style="left:0px;top:454px;width:25px;height:1px;background:#c4c4c4;"></div><div class="t" style="left:12.50px;top:440.00px;font-size:12.8px;color:#fff;transform:translateX(-50%) scaleX(1.0000);transform-origin:50% 0;">9</div><div class="r" style="left:0px;top:474px;width:25px;height:1px;background:#c4c4c4;"></div><div class="t" style="left:12.50px;top:460.00px;font-size:12.8px;color:#fff;transform:translateX(-50%) scaleX(1.0000);transform-origin:50% 0;">10</div><div class="r" style="left:0px;top:494px;width:25px;height:1px;background:#c4c4c4;"></div><div class="t" style="left:12.50px;top:480.00px;font-size:12.8px;color:#fff;transform:translateX(-50%) scaleX(1.0000);transform-origin:50% 0;">11</div><div class="r" style="left:0px;top:514px;width:25px;height:1px;background:#c4c4c4;"></div><div class="t" style="left:12.50px;top:500.00px;font-size:12.8px;color:#fff;transform:translateX(-50%) scaleX(1.0000);transform-origin:50% 0;">12</div><div class="r" style="left:0px;top:534px;width:25px;height:1px;background:#c4c4c4;"></div><div class="t" style="left:12.50px;top:520.00px;font-size:12.8px;color:#fff;transform:translateX(-50%) scaleX(1.0000);transform-origin:50% 0;">13</div><div class="r" style="left:0px;top:554px;width:25px;height:1px;background:#c4c4c4;"></div><div class="t" style="left:12.50px;top:540.00px;font-size:12.8px;color:#fff;transform:translateX(-50%) scaleX(1.0000);transform-origin:50% 0;">14</div><div class="r" style="left:0px;top:574px;width:25px;height:1px;background:#c4c4c4;"></div><div class="t" style="left:12.50px;top:560.00px;font-size:12.8px;color:#fff;transform:translateX(-50%) scaleX(1.0000);transform-origin:50% 0;">15</div><div class="r" style="left:0px;top:594px;width:25px;height:1px;background:#c4c4c4;"></div><div class="t" style="left:12.50px;top:580.00px;font-size:12.8px;color:#fff;transform:translateX(-50%) scaleX(1.0000);transform-origin:50% 0;">16</div><div class="r" style="left:0px;top:614px;width:25px;height:1px;background:#c4c4c4;"></div><div class="t" style="left:12.50px;top:600.00px;font-size:12.8px;color:#fff;transform:translateX(-50%) scaleX(1.0000);transform-origin:50% 0;">17</div><div class="r" style="left:0px;top:634px;width:25px;height:1px;background:#c4c4c4;"></div><div class="t" style="left:12.50px;top:620.00px;font-size:12.8px;color:#fff;transform:translateX(-50%) scaleX(1.0000);transform-origin:50% 0;">18</div><div class="r" style="left:0px;top:654px;width:25px;height:1px;background:#c4c4c4;"></div><div class="t" style="left:12.50px;top:640.00px;font-size:12.8px;color:#fff;transform:translateX(-50%) scaleX(1.0000);transform-origin:50% 0;">19</div><div class="r" style="left:0px;top:674px;width:25px;height:1px;background:#c4c4c4;"></div><div class="t" style="left:12.50px;top:660.00px;font-size:12.8px;color:#fff;transform:translateX(-50%) scaleX(1.0000);transform-origin:50% 0;">20</div><div class="r" style="left:26px;top:294px;width:1318px;height:1px;background:#dadada;"></div><div class="r" style="left:26px;top:314px;width:1318px;height:1px;background:#dadada;"></div><div class="r" style="left:26px;top:334px;width:1318px;height:1px;background:#dadada;"></div><div class="r" style="left:26px;top:354px;width:1318px;height:1px;background:#dadada;"></div><div class="r" style="left:26px;top:374px;width:1318px;height:1px;background:#dadada;"></div><div class="r" style="left:26px;top:394px;width:1318px;height:1px;background:#dadada;"></div><div class="r" style="left:26px;top:414px;width:1318px;height:1px;background:#dadada;"></div><div class="r" style="left:26px;top:434px;width:1318px;height:1px;background:#dadada;"></div><div class="r" style="left:26px;top:454px;width:1318px;height:1px;background:#dadada;"></div><div class="r" style="left:26px;top:474px;width:1318px;height:1px;background:#dadada;"></div><div class="r" style="left:26px;top:494px;width:1318px;height:1px;background:#dadada;"></div><div class="r" style="left:26px;top:514px;width:1318px;height:1px;background:#dadada;"></div><div class="r" style="left:26px;top:534px;width:1318px;height:1px;background:#dadada;"></div><div class="r" style="left:26px;top:554px;width:1318px;height:1px;background:#dadada;"></div><div class="r" style="left:26px;top:574px;width:1318px;height:1px;background:#dadada;"></div><div class="r" style="left:26px;top:594px;width:1318px;height:1px;background:#dadada;"></div><div class="r" style="left:26px;top:614px;width:1318px;height:1px;background:#dadada;"></div><div class="r" style="left:26px;top:634px;width:1318px;height:1px;background:#dadada;"></div><div class="r" style="left:26px;top:654px;width:1318px;height:1px;background:#dadada;"></div><div class="r" style="left:26px;top:674px;width:1318px;height:1px;background:#dadada;"></div><div class="r" style="left:58px;top:238px;width:1px;height:428px;background:#dadada;"></div><div class="r" style="left:98px;top:238px;width:1px;height:428px;background:#dadada;"></div><div class="r" style="left:195px;top:238px;width:1px;height:428px;background:#dadada;"></div><div class="r" style="left:489px;top:238px;width:1px;height:428px;background:#dadada;"></div><div class="r" style="left:562px;top:238px;width:1px;height:428px;background:#dadada;"></div><div class="r" style="left:649px;top:238px;width:1px;height:428px;background:#dadada;"></div><div class="r" style="left:729px;top:238px;width:1px;height:428px;background:#dadada;"></div><div class="r" style="left:809px;top:238px;width:1px;height:428px;background:#dadada;"></div><div class="r" style="left:903px;top:238px;width:1px;height:428px;background:#dadada;"></div><div class="r" style="left:997px;top:238px;width:1px;height:428px;background:#dadada;"></div><div class="r" style="left:1077px;top:238px;width:1px;height:428px;background:#dadada;"></div><div class="r" style="left:1157px;top:238px;width:1px;height:428px;background:#dadada;"></div><div class="r" style="left:1237px;top:238px;width:1px;height:428px;background:#dadada;"></div><div class="r" style="left:1317px;top:238px;width:1px;height:428px;background:#dadada;"></div><div class="r" style="left:24px;top:374px;width:2px;height:21px;background:#1e7145;"></div><div class="r" style="left:195px;top:237px;width:295px;height:2px;background:#1e7145;"></div><div class="r" style="left:195px;top:239px;width:802px;height:55px;background:#ddebf7;"></div><div class="t" style="left:593.00px;top:248.00px;font-size:42.5px;font-weight:bold;font-style:italic;color:#000;transform:translateX(-50%) scaleX(0.8999);transform-origin:50% 0;">KARDEX</div><div class="r" style="left:98px;top:314px;width:900px;height:21px;background:#9bc2e6;border:1px solid #000;box-sizing:border-box;"></div><div class="r" style="left:489px;top:314px;width:1px;height:21px;background:#000;"></div><div class="r" style="left:562px;top:314px;width:1px;height:21px;background:#000;"></div><div class="r" style="left:809px;top:314px;width:1px;height:21px;background:#000;"></div><div class="r" style="left:903px;top:314px;width:1px;height:21px;background:#000;"></div><div class="t" style="left:293.50px;top:318.00px;font-size:13.4px;font-weight:bold;color:#000;transform:translateX(-50%) scaleX(0.9087);transform-origin:50% 0;">PRODUCTO</div><div class="t" style="left:686.00px;top:318.00px;font-size:13.4px;font-weight:bold;color:#000;transform:translateX(-50%) scaleX(0.8817);transform-origin:50% 0;">ENTRADAS</div><div class="t" style="left:856.50px;top:319.00px;font-size:13.4px;font-weight:bold;color:#000;transform:translateX(-50%) scaleX(0.8745);transform-origin:50% 0;">SALIDA</div><div class="t" style="left:950.50px;top:319.00px;font-size:13.4px;font-weight:bold;color:#000;transform:translateX(-50%) scaleX(0.8696);transform-origin:50% 0;">SALDO</div><div class="r" style="left:98px;top:354px;width:900px;height:20px;background:#4472c4;"></div><div class="t" style="left:101.30px;top:359.00px;font-size:13.4px;font-weight:bold;font-style:italic;color:#000;transform:scaleX(0.8570);transform-origin:0 0;">REFERENCIA</div><div class="r" style="left:178px;top:356px;width:16px;height:16px;background:#f4f4f4;border:1px solid #c9c9c9;box-sizing:border-box;"></div><svg class="r" style="left:182px;top:362px" width="8" height="5" viewBox="0 0 8 5"><path d="M0 0h8L4 4.5z" fill="#5f5f5f"/></svg><div class="t" style="left:198.30px;top:359.00px;font-size:13.4px;font-weight:bold;font-style:italic;color:#000;transform:scaleX(0.9342);transform-origin:0 0;">NOMBRE</div><div class="r" style="left:472px;top:356px;width:16px;height:16px;background:#f4f4f4;border:1px solid #c9c9c9;box-sizing:border-box;"></div><svg class="r" style="left:476px;top:362px" width="8" height="5" viewBox="0 0 8 5"><path d="M0 0h8L4 4.5z" fill="#5f5f5f"/></svg><div class="t" style="left:492.30px;top:359.00px;font-size:13.4px;font-weight:bold;font-style:italic;color:#000;transform:scaleX(0.9618);transform-origin:0 0;">UNIDAD</div><div class="r" style="left:545px;top:356px;width:16px;height:16px;background:#f4f4f4;border:1px solid #c9c9c9;box-sizing:border-box;"></div><svg class="r" style="left:549px;top:362px" width="8" height="5" viewBox="0 0 8 5"><path d="M0 0h8L4 4.5z" fill="#5f5f5f"/></svg><div class="t" style="left:565.30px;top:359.00px;font-size:13.4px;font-weight:bold;font-style:italic;color:#000;transform:scaleX(0.9204);transform-origin:0 0;">CANTIDAD</div><div class="r" style="left:632px;top:356px;width:16px;height:16px;background:#f4f4f4;border:1px solid #c9c9c9;box-sizing:border-box;"></div><svg class="r" style="left:636px;top:362px" width="8" height="5" viewBox="0 0 8 5"><path d="M0 0h8L4 4.5z" fill="#5f5f5f"/></svg><div class="t" style="left:652.30px;top:359.00px;font-size:13.4px;font-weight:bold;font-style:italic;color:#000;transform:scaleX(0.8740);transform-origin:0 0;">COSTO</div><div class="r" style="left:712px;top:356px;width:16px;height:16px;background:#f4f4f4;border:1px solid #c9c9c9;box-sizing:border-box;"></div><svg class="r" style="left:716px;top:362px" width="8" height="5" viewBox="0 0 8 5"><path d="M0 0h8L4 4.5z" fill="#5f5f5f"/></svg><div class="t" style="left:732.30px;top:359.00px;font-size:13.4px;font-weight:bold;font-style:italic;color:#000;transform:scaleX(0.9036);transform-origin:0 0;">TOTAL</div><div class="r" style="left:792px;top:356px;width:16px;height:16px;background:#f4f4f4;border:1px solid #c9c9c9;box-sizing:border-box;"></div><svg class="r" style="left:796px;top:362px" width="8" height="5" viewBox="0 0 8 5"><path d="M0 0h8L4 4.5z" fill="#5f5f5f"/></svg><div class="t" style="left:812.30px;top:359.00px;font-size:13.4px;font-weight:bold;font-style:italic;color:#000;transform:scaleX(0.9279);transform-origin:0 0;">CANTIDAD2</div><div class="r" style="left:886px;top:356px;width:16px;height:16px;background:#f4f4f4;border:1px solid #c9c9c9;box-sizing:border-box;"></div><svg class="r" style="left:890px;top:362px" width="8" height="5" viewBox="0 0 8 5"><path d="M0 0h8L4 4.5z" fill="#5f5f5f"/></svg><div class="t" style="left:906.30px;top:359.00px;font-size:13.4px;font-weight:bold;font-style:italic;color:#000;transform:scaleX(0.9279);transform-origin:0 0;">CANTIDAD5</div><div class="r" style="left:980px;top:356px;width:16px;height:16px;background:#f4f4f4;border:1px solid #c9c9c9;box-sizing:border-box;"></div><svg class="r" style="left:984px;top:362px" width="8" height="5" viewBox="0 0 8 5"><path d="M0 0h8L4 4.5z" fill="#5f5f5f"/></svg><div class="r" style="left:98px;top:374px;width:900px;height:20px;background:#d9e1f2;"></div><div class="r" style="left:98px;top:374px;width:900px;height:1px;background:#8ea9db;"></div><div class="r" style="left:98px;top:394px;width:900px;height:1px;background:#8ea9db;"></div><div class="t" style="left:101.30px;top:379.00px;font-size:13.4px;color:#000;transform:scaleX(0.9134);transform-origin:0 0;-webkit-text-stroke:0.25px #000;">EQ INF 1</div><div class="t" style="left:198.30px;top:379.00px;font-size:13.4px;color:#000;transform:scaleX(0.9136);transform-origin:0 0;-webkit-text-stroke:0.25px #000;">KIT DE TINTAS 664 ORIG</div><div class="t" style="left:492.30px;top:379.00px;font-size:13.4px;color:#000;transform:scaleX(0.9562);transform-origin:0 0;-webkit-text-stroke:0.25px #000;">UNIDAD</div><div class="t" style="right:718.20px;top:379.00px;font-size:13.4px;color:#000;transform:scaleX(0.9977);transform-origin:100% 0;-webkit-text-stroke:0.25px #000;">5</div><div class="t" style="right:638.20px;top:379.00px;font-size:13.4px;color:#000;transform:scaleX(0.9977);transform-origin:100% 0;-webkit-text-stroke:0.25px #000;">36</div><div class="t" style="right:558.20px;top:379.00px;font-size:13.4px;color:#000;transform:scaleX(0.9977);transform-origin:100% 0;-webkit-text-stroke:0.25px #000;">180</div><div class="t" style="right:464.20px;top:379.00px;font-size:13.4px;color:#000;transform:scaleX(0.9977);transform-origin:100% 0;-webkit-text-stroke:0.25px #000;">3</div><div class="t" style="right:370.20px;top:379.00px;font-size:13.4px;color:#000;transform:scaleX(0.9977);transform-origin:100% 0;-webkit-text-stroke:0.25px #000;">2</div><div class="r" style="left:98px;top:394px;width:900px;height:1px;background:#8ea9db;"></div><div class="r" style="left:98px;top:414px;width:900px;height:1px;background:#8ea9db;"></div><div class="t" style="left:101.30px;top:399.00px;font-size:13.4px;color:#000;transform:scaleX(0.9134);transform-origin:0 0;-webkit-text-stroke:0.25px #000;">EQ INF 2</div><div class="t" style="left:198.30px;top:399.00px;font-size:13.4px;color:#000;transform:scaleX(0.9027);transform-origin:0 0;-webkit-text-stroke:0.25px #000;">KIT DE TINTAS 664 GENER</div><div class="t" style="left:492.30px;top:399.00px;font-size:13.4px;color:#000;transform:scaleX(0.9562);transform-origin:0 0;-webkit-text-stroke:0.25px #000;">UNIDAD</div><div class="t" style="right:718.20px;top:399.00px;font-size:13.4px;color:#000;transform:scaleX(0.9977);transform-origin:100% 0;-webkit-text-stroke:0.25px #000;">6</div><div class="t" style="right:638.20px;top:399.00px;font-size:13.4px;color:#000;transform:scaleX(0.9977);transform-origin:100% 0;-webkit-text-stroke:0.25px #000;">20</div><div class="t" style="right:558.20px;top:399.00px;font-size:13.4px;color:#000;transform:scaleX(0.9977);transform-origin:100% 0;-webkit-text-stroke:0.25px #000;">120</div><div class="t" style="right:464.20px;top:399.00px;font-size:13.4px;color:#000;transform:scaleX(0.9977);transform-origin:100% 0;-webkit-text-stroke:0.25px #000;">0</div><div class="t" style="right:370.20px;top:399.00px;font-size:13.4px;color:#000;transform:scaleX(0.9977);transform-origin:100% 0;-webkit-text-stroke:0.25px #000;">6</div><div class="r" style="left:98px;top:414px;width:900px;height:20px;background:#d9e1f2;"></div><div class="r" style="left:98px;top:414px;width:900px;height:1px;background:#8ea9db;"></div><div class="r" style="left:98px;top:434px;width:900px;height:1px;background:#8ea9db;"></div><div class="t" style="left:101.30px;top:419.00px;font-size:13.4px;color:#000;transform:scaleX(0.9134);transform-origin:0 0;-webkit-text-stroke:0.25px #000;">EQ INF 3</div><div class="t" style="left:198.30px;top:419.00px;font-size:13.4px;color:#000;transform:scaleX(0.9179);transform-origin:0 0;-webkit-text-stroke:0.25px #000;">KIT TINTAS EPSON 504-544 ORIG</div><div class="t" style="left:492.30px;top:419.00px;font-size:13.4px;color:#000;transform:scaleX(0.9562);transform-origin:0 0;-webkit-text-stroke:0.25px #000;">UNIDAD</div><div class="t" style="right:718.20px;top:419.00px;font-size:13.4px;color:#000;transform:scaleX(0.9977);transform-origin:100% 0;-webkit-text-stroke:0.25px #000;">2</div><div class="t" style="right:638.20px;top:419.00px;font-size:13.4px;color:#000;transform:scaleX(0.9977);transform-origin:100% 0;-webkit-text-stroke:0.25px #000;">40</div><div class="t" style="right:558.20px;top:419.00px;font-size:13.4px;color:#000;transform:scaleX(0.9977);transform-origin:100% 0;-webkit-text-stroke:0.25px #000;">80</div><div class="t" style="right:464.20px;top:419.00px;font-size:13.4px;color:#000;transform:scaleX(0.9977);transform-origin:100% 0;-webkit-text-stroke:0.25px #000;">1</div><div class="t" style="right:370.20px;top:419.00px;font-size:13.4px;color:#000;transform:scaleX(0.9977);transform-origin:100% 0;-webkit-text-stroke:0.25px #000;">1</div><div class="r" style="left:98px;top:434px;width:900px;height:1px;background:#8ea9db;"></div><div class="r" style="left:98px;top:454px;width:900px;height:1px;background:#8ea9db;"></div><div class="t" style="left:101.30px;top:439.00px;font-size:13.4px;color:#000;transform:scaleX(0.9134);transform-origin:0 0;-webkit-text-stroke:0.25px #000;">EQ INF 4</div><div class="t" style="left:198.30px;top:439.00px;font-size:13.4px;color:#000;transform:scaleX(0.9094);transform-origin:0 0;-webkit-text-stroke:0.25px #000;">KIT TINTAS EPSON 504-544 GENER</div><div class="t" style="left:492.30px;top:439.00px;font-size:13.4px;color:#000;transform:scaleX(0.9562);transform-origin:0 0;-webkit-text-stroke:0.25px #000;">UNIDAD</div><div class="t" style="right:718.20px;top:439.00px;font-size:13.4px;color:#000;transform:scaleX(0.9977);transform-origin:100% 0;-webkit-text-stroke:0.25px #000;">2</div><div class="t" style="right:638.20px;top:439.00px;font-size:13.4px;color:#000;transform:scaleX(0.9977);transform-origin:100% 0;-webkit-text-stroke:0.25px #000;">20</div><div class="t" style="right:558.20px;top:439.00px;font-size:13.4px;color:#000;transform:scaleX(0.9977);transform-origin:100% 0;-webkit-text-stroke:0.25px #000;">40</div><div class="t" style="right:464.20px;top:439.00px;font-size:13.4px;color:#000;transform:scaleX(0.9977);transform-origin:100% 0;-webkit-text-stroke:0.25px #000;">0</div><div class="t" style="right:370.20px;top:439.00px;font-size:13.4px;color:#000;transform:scaleX(0.9977);transform-origin:100% 0;-webkit-text-stroke:0.25px #000;">2</div><div class="r" style="left:98px;top:454px;width:900px;height:20px;background:#d9e1f2;"></div><div class="r" style="left:98px;top:454px;width:900px;height:1px;background:#8ea9db;"></div><div class="r" style="left:98px;top:474px;width:900px;height:1px;background:#8ea9db;"></div><div class="t" style="left:101.30px;top:459.00px;font-size:13.4px;color:#000;transform:scaleX(0.9134);transform-origin:0 0;-webkit-text-stroke:0.25px #000;">EQ INF 5</div><div class="t" style="left:198.30px;top:459.00px;font-size:13.4px;color:#000;transform:scaleX(0.9254);transform-origin:0 0;-webkit-text-stroke:0.25px #000;">BOTES TINTA EPSON GEN 664-504-544</div><div class="t" style="left:492.30px;top:459.00px;font-size:13.4px;color:#000;transform:scaleX(0.9562);transform-origin:0 0;-webkit-text-stroke:0.25px #000;">UNIDAD</div><div class="t" style="right:718.20px;top:459.00px;font-size:13.4px;color:#000;transform:scaleX(0.9977);transform-origin:100% 0;-webkit-text-stroke:0.25px #000;">4</div><div class="t" style="right:638.20px;top:459.00px;font-size:13.4px;color:#000;transform:scaleX(0.9977);transform-origin:100% 0;-webkit-text-stroke:0.25px #000;">5</div><div class="t" style="right:558.20px;top:459.00px;font-size:13.4px;color:#000;transform:scaleX(0.9977);transform-origin:100% 0;-webkit-text-stroke:0.25px #000;">20</div><div class="t" style="right:464.20px;top:459.00px;font-size:13.4px;color:#000;transform:scaleX(0.9977);transform-origin:100% 0;-webkit-text-stroke:0.25px #000;">2</div><div class="t" style="right:370.20px;top:459.00px;font-size:13.4px;color:#000;transform:scaleX(0.9977);transform-origin:100% 0;-webkit-text-stroke:0.25px #000;">2</div><div class="r" style="left:98px;top:474px;width:900px;height:1px;background:#8ea9db;"></div><div class="r" style="left:98px;top:494px;width:900px;height:1px;background:#8ea9db;"></div><div class="t" style="left:101.30px;top:479.00px;font-size:13.4px;color:#000;transform:scaleX(0.9134);transform-origin:0 0;-webkit-text-stroke:0.25px #000;">EQ INF 6</div><div class="t" style="left:198.30px;top:479.00px;font-size:13.4px;color:#000;transform:scaleX(0.8774);transform-origin:0 0;-webkit-text-stroke:0.25px #000;">TECLADO</div><div class="t" style="left:492.30px;top:479.00px;font-size:13.4px;color:#000;transform:scaleX(0.9562);transform-origin:0 0;-webkit-text-stroke:0.25px #000;">UNIDAD</div><div class="t" style="right:718.20px;top:479.00px;font-size:13.4px;color:#000;transform:scaleX(0.9977);transform-origin:100% 0;-webkit-text-stroke:0.25px #000;">1</div><div class="t" style="right:638.20px;top:479.00px;font-size:13.4px;color:#000;transform:scaleX(0.9977);transform-origin:100% 0;-webkit-text-stroke:0.25px #000;">15</div><div class="t" style="right:558.20px;top:479.00px;font-size:13.4px;color:#000;transform:scaleX(0.9977);transform-origin:100% 0;-webkit-text-stroke:0.25px #000;">15</div><div class="t" style="right:464.20px;top:479.00px;font-size:13.4px;color:#000;transform:scaleX(0.9977);transform-origin:100% 0;-webkit-text-stroke:0.25px #000;">0</div><div class="t" style="right:370.20px;top:479.00px;font-size:13.4px;color:#000;transform:scaleX(0.9977);transform-origin:100% 0;-webkit-text-stroke:0.25px #000;">1</div><div class="r" style="left:98px;top:494px;width:900px;height:20px;background:#d9e1f2;"></div><div class="r" style="left:98px;top:494px;width:900px;height:1px;background:#8ea9db;"></div><div class="r" style="left:98px;top:514px;width:900px;height:1px;background:#8ea9db;"></div><div class="t" style="left:101.30px;top:499.00px;font-size:13.4px;color:#000;transform:scaleX(0.9134);transform-origin:0 0;-webkit-text-stroke:0.25px #000;">EQ INF 7</div><div class="t" style="left:198.30px;top:499.00px;font-size:13.4px;color:#000;transform:scaleX(0.9274);transform-origin:0 0;-webkit-text-stroke:0.25px #000;">MOUSE</div><div class="t" style="left:492.30px;top:499.00px;font-size:13.4px;color:#000;transform:scaleX(0.9562);transform-origin:0 0;-webkit-text-stroke:0.25px #000;">UNIDAD</div><div class="t" style="right:718.20px;top:499.00px;font-size:13.4px;color:#000;transform:scaleX(0.9977);transform-origin:100% 0;-webkit-text-stroke:0.25px #000;">3</div><div class="t" style="right:638.20px;top:499.00px;font-size:13.4px;color:#000;transform:scaleX(0.9961);transform-origin:100% 0;-webkit-text-stroke:0.25px #000;">10,34</div><div class="t" style="right:558.20px;top:499.00px;font-size:13.4px;color:#000;transform:scaleX(0.9961);transform-origin:100% 0;-webkit-text-stroke:0.25px #000;">31,02</div><div class="t" style="right:464.20px;top:499.00px;font-size:13.4px;color:#000;transform:scaleX(0.9977);transform-origin:100% 0;-webkit-text-stroke:0.25px #000;">0</div><div class="t" style="right:370.20px;top:499.00px;font-size:13.4px;color:#000;transform:scaleX(0.9977);transform-origin:100% 0;-webkit-text-stroke:0.25px #000;">3</div><div class="r" style="left:98px;top:514px;width:900px;height:1px;background:#8ea9db;"></div><div class="r" style="left:98px;top:534px;width:900px;height:1px;background:#8ea9db;"></div><div class="t" style="left:101.30px;top:519.00px;font-size:13.4px;color:#000;transform:scaleX(0.9134);transform-origin:0 0;-webkit-text-stroke:0.25px #000;">EQ INF 8</div><div class="t" style="left:198.30px;top:519.00px;font-size:13.4px;color:#000;transform:scaleX(0.8990);transform-origin:0 0;-webkit-text-stroke:0.25px #000;">LIMPIA CONTACTOS CYCLO</div><div class="t" style="left:492.30px;top:519.00px;font-size:13.4px;color:#000;transform:scaleX(0.9562);transform-origin:0 0;-webkit-text-stroke:0.25px #000;">UNIDAD</div><div class="t" style="right:718.20px;top:519.00px;font-size:13.4px;color:#000;transform:scaleX(0.9977);transform-origin:100% 0;-webkit-text-stroke:0.25px #000;">1</div><div class="t" style="right:638.20px;top:519.00px;font-size:13.4px;color:#000;transform:scaleX(0.9977);transform-origin:100% 0;-webkit-text-stroke:0.25px #000;">10</div><div class="t" style="right:558.20px;top:519.00px;font-size:13.4px;color:#000;transform:scaleX(0.9977);transform-origin:100% 0;-webkit-text-stroke:0.25px #000;">10</div><div class="t" style="right:464.20px;top:519.00px;font-size:13.4px;color:#000;transform:scaleX(0.9977);transform-origin:100% 0;-webkit-text-stroke:0.25px #000;">0</div><div class="t" style="right:370.20px;top:519.00px;font-size:13.4px;color:#000;transform:scaleX(0.9977);transform-origin:100% 0;-webkit-text-stroke:0.25px #000;">1</div><div class="r" style="left:98px;top:534px;width:900px;height:20px;background:#d9e1f2;"></div><div class="r" style="left:98px;top:534px;width:900px;height:1px;background:#8ea9db;"></div><div class="r" style="left:98px;top:554px;width:900px;height:1px;background:#8ea9db;"></div><div class="t" style="left:101.30px;top:539.00px;font-size:13.4px;color:#000;transform:scaleX(0.9357);transform-origin:0 0;-webkit-text-stroke:0.25px #000;">SUM OF 1</div><div class="t" style="left:198.30px;top:539.00px;font-size:13.4px;color:#000;transform:scaleX(0.8797);transform-origin:0 0;-webkit-text-stroke:0.25px #000;">PORTA CLIPS</div><div class="t" style="left:492.30px;top:539.00px;font-size:13.4px;color:#000;transform:scaleX(0.8605);transform-origin:0 0;-webkit-text-stroke:0.25px #000;">CAJA</div><div class="t" style="right:718.20px;top:539.00px;font-size:13.4px;color:#000;transform:scaleX(0.9977);transform-origin:100% 0;-webkit-text-stroke:0.25px #000;">7</div><div class="t" style="right:638.20px;top:539.00px;font-size:13.4px;color:#000;transform:scaleX(0.9956);transform-origin:100% 0;-webkit-text-stroke:0.25px #000;">2,98</div><div class="t" style="right:558.20px;top:539.00px;font-size:13.4px;color:#000;transform:scaleX(0.9961);transform-origin:100% 0;-webkit-text-stroke:0.25px #000;">20,86</div><div class="t" style="right:464.20px;top:539.00px;font-size:13.4px;color:#000;transform:scaleX(0.9977);transform-origin:100% 0;-webkit-text-stroke:0.25px #000;">5</div><div class="t" style="right:370.20px;top:539.00px;font-size:13.4px;color:#000;transform:scaleX(0.9977);transform-origin:100% 0;-webkit-text-stroke:0.25px #000;">2</div><div class="r" style="left:98px;top:554px;width:900px;height:1px;background:#8ea9db;"></div><div class="r" style="left:98px;top:574px;width:900px;height:1px;background:#8ea9db;"></div><div class="t" style="left:101.30px;top:559.00px;font-size:13.4px;color:#000;transform:scaleX(0.9357);transform-origin:0 0;-webkit-text-stroke:0.25px #000;">SUM OF 2</div><div class="t" style="left:198.30px;top:559.00px;font-size:13.4px;color:#000;transform:scaleX(0.9032);transform-origin:0 0;-webkit-text-stroke:0.25px #000;">CARTULINA LLANAS</div><div class="t" style="left:492.30px;top:559.00px;font-size:13.4px;color:#000;transform:scaleX(0.9346);transform-origin:0 0;-webkit-text-stroke:0.25px #000;">FUNDA</div><div class="t" style="right:718.20px;top:559.00px;font-size:13.4px;color:#000;transform:scaleX(0.9977);transform-origin:100% 0;-webkit-text-stroke:0.25px #000;">30</div><div class="t" style="right:638.20px;top:559.00px;font-size:13.4px;color:#000;transform:scaleX(0.9948);transform-origin:100% 0;-webkit-text-stroke:0.25px #000;">0,1</div><div class="t" style="right:558.20px;top:559.00px;font-size:13.4px;color:#000;transform:scaleX(0.9977);transform-origin:100% 0;-webkit-text-stroke:0.25px #000;">3</div><div class="t" style="right:464.20px;top:559.00px;font-size:13.4px;color:#000;transform:scaleX(0.9977);transform-origin:100% 0;-webkit-text-stroke:0.25px #000;">18</div><div class="t" style="right:370.20px;top:559.00px;font-size:13.4px;color:#000;transform:scaleX(0.9977);transform-origin:100% 0;-webkit-text-stroke:0.25px #000;">12</div><div class="r" style="left:98px;top:574px;width:900px;height:20px;background:#d9e1f2;"></div><div class="r" style="left:98px;top:574px;width:900px;height:1px;background:#8ea9db;"></div><div class="r" style="left:98px;top:594px;width:900px;height:1px;background:#8ea9db;"></div><div class="t" style="left:101.30px;top:579.00px;font-size:13.4px;color:#000;transform:scaleX(0.9357);transform-origin:0 0;-webkit-text-stroke:0.25px #000;">SUM OF 3</div><div class="t" style="left:198.30px;top:579.00px;font-size:13.4px;color:#000;transform:scaleX(0.9273);transform-origin:0 0;-webkit-text-stroke:0.25px #000;">CARTULINA HILO A4</div><div class="t" style="left:492.30px;top:579.00px;font-size:13.4px;color:#000;transform:scaleX(0.9346);transform-origin:0 0;-webkit-text-stroke:0.25px #000;">FUNDA</div><div class="t" style="right:718.20px;top:579.00px;font-size:13.4px;color:#000;transform:scaleX(0.9977);transform-origin:100% 0;-webkit-text-stroke:0.25px #000;">100</div><div class="t" style="right:638.20px;top:579.00px;font-size:13.4px;color:#000;transform:scaleX(0.9956);transform-origin:100% 0;-webkit-text-stroke:0.25px #000;">0,15</div><div class="t" style="right:558.20px;top:579.00px;font-size:13.4px;color:#000;transform:scaleX(0.9977);transform-origin:100% 0;-webkit-text-stroke:0.25px #000;">15</div><div class="t" style="right:464.20px;top:579.00px;font-size:13.4px;color:#000;transform:scaleX(0.9977);transform-origin:100% 0;-webkit-text-stroke:0.25px #000;">2</div><div class="t" style="right:370.20px;top:579.00px;font-size:13.4px;color:#000;transform:scaleX(0.9977);transform-origin:100% 0;-webkit-text-stroke:0.25px #000;">98</div><div class="r" style="left:98px;top:594px;width:900px;height:1px;background:#8ea9db;"></div><div class="r" style="left:98px;top:614px;width:900px;height:1px;background:#8ea9db;"></div><div class="t" style="left:101.30px;top:599.00px;font-size:13.4px;color:#000;transform:scaleX(0.9357);transform-origin:0 0;-webkit-text-stroke:0.25px #000;">SUM OF 4</div><div class="t" style="left:198.30px;top:599.00px;font-size:13.4px;color:#000;transform:scaleX(0.8613);transform-origin:0 0;-webkit-text-stroke:0.25px #000;">SELLO RECIBIDO RECEPCION</div><div class="t" style="left:492.30px;top:599.00px;font-size:13.4px;color:#000;transform:scaleX(0.9562);transform-origin:0 0;-webkit-text-stroke:0.25px #000;">UNIDAD</div><div class="t" style="right:718.20px;top:599.00px;font-size:13.4px;color:#000;transform:scaleX(0.9977);transform-origin:100% 0;-webkit-text-stroke:0.25px #000;">1</div><div class="t" style="right:638.20px;top:599.00px;font-size:13.4px;color:#000;transform:scaleX(0.9961);transform-origin:100% 0;-webkit-text-stroke:0.25px #000;">39,95</div><div class="t" style="right:558.20px;top:599.00px;font-size:13.4px;color:#000;transform:scaleX(0.9961);transform-origin:100% 0;-webkit-text-stroke:0.25px #000;">39,95</div><div class="t" style="right:464.20px;top:599.00px;font-size:13.4px;color:#000;transform:scaleX(0.9977);transform-origin:100% 0;-webkit-text-stroke:0.25px #000;">2</div><div class="t" style="right:370.20px;top:599.00px;font-size:13.4px;color:#000;-webkit-text-stroke:0.25px #000;">-1</div><div class="r" style="left:98px;top:614px;width:900px;height:20px;background:#d9e1f2;"></div><div class="r" style="left:98px;top:614px;width:900px;height:1px;background:#8ea9db;"></div><div class="r" style="left:98px;top:634px;width:900px;height:1px;background:#8ea9db;"></div><div class="t" style="left:101.30px;top:619.00px;font-size:13.4px;color:#000;transform:scaleX(0.9357);transform-origin:0 0;-webkit-text-stroke:0.25px #000;">SUM OF 5</div><div class="t" style="left:198.30px;top:619.00px;font-size:13.4px;color:#000;transform:scaleX(0.8791);transform-origin:0 0;-webkit-text-stroke:0.25px #000;">SELLO POS FIRMA</div><div class="t" style="left:492.30px;top:619.00px;font-size:13.4px;color:#000;transform:scaleX(0.9562);transform-origin:0 0;-webkit-text-stroke:0.25px #000;">UNIDAD</div><div class="t" style="right:718.20px;top:619.00px;font-size:13.4px;color:#000;transform:scaleX(0.9977);transform-origin:100% 0;-webkit-text-stroke:0.25px #000;">1</div><div class="t" style="right:638.20px;top:619.00px;font-size:13.4px;color:#000;transform:scaleX(0.9956);transform-origin:100% 0;-webkit-text-stroke:0.25px #000;">42,8</div><div class="t" style="right:558.20px;top:619.00px;font-size:13.4px;color:#000;transform:scaleX(0.9956);transform-origin:100% 0;-webkit-text-stroke:0.25px #000;">42,8</div><div class="t" style="right:464.20px;top:619.00px;font-size:13.4px;color:#000;transform:scaleX(0.9977);transform-origin:100% 0;-webkit-text-stroke:0.25px #000;">2</div><div class="t" style="right:370.20px;top:619.00px;font-size:13.4px;color:#000;-webkit-text-stroke:0.25px #000;">-1</div><div class="r" style="left:98px;top:634px;width:900px;height:1px;background:#8ea9db;"></div><div class="r" style="left:98px;top:654px;width:900px;height:1px;background:#8ea9db;"></div><div class="t" style="left:101.30px;top:639.00px;font-size:13.4px;color:#000;transform:scaleX(0.9357);transform-origin:0 0;-webkit-text-stroke:0.25px #000;">SUM OF 6</div><div class="t" style="left:198.30px;top:639.00px;font-size:13.4px;color:#000;transform:scaleX(0.8649);transform-origin:0 0;-webkit-text-stroke:0.25px #000;">SELLO RECIBIDO - SECRETARIA- TESORERIA</div><div class="t" style="left:492.30px;top:639.00px;font-size:13.4px;color:#000;transform:scaleX(0.9562);transform-origin:0 0;-webkit-text-stroke:0.25px #000;">UNIDAD</div><div class="t" style="right:718.20px;top:639.00px;font-size:13.4px;color:#000;transform:scaleX(0.9977);transform-origin:100% 0;-webkit-text-stroke:0.25px #000;">1</div><div class="t" style="right:638.20px;top:639.00px;font-size:13.4px;color:#000;transform:scaleX(0.9961);transform-origin:100% 0;-webkit-text-stroke:0.25px #000;">39,95</div><div class="t" style="right:558.20px;top:639.00px;font-size:13.4px;color:#000;transform:scaleX(0.9961);transform-origin:100% 0;-webkit-text-stroke:0.25px #000;">39,95</div><div class="t" style="right:464.20px;top:639.00px;font-size:13.4px;color:#000;transform:scaleX(0.9977);transform-origin:100% 0;-webkit-text-stroke:0.25px #000;">0</div><div class="t" style="right:370.20px;top:639.00px;font-size:13.4px;color:#000;transform:scaleX(0.9977);transform-origin:100% 0;-webkit-text-stroke:0.25px #000;">1</div><div class="r" style="left:98px;top:654px;width:900px;height:20px;background:#d9e1f2;"></div><div class="r" style="left:98px;top:654px;width:900px;height:1px;background:#8ea9db;"></div><div class="r" style="left:98px;top:674px;width:900px;height:1px;background:#8ea9db;"></div><div class="t" style="left:101.30px;top:659.00px;font-size:13.4px;color:#000;transform:scaleX(0.9357);transform-origin:0 0;-webkit-text-stroke:0.25px #000;">SUM OF 7</div><div class="t" style="left:198.30px;top:659.00px;font-size:13.4px;color:#000;transform:scaleX(0.8828);transform-origin:0 0;-webkit-text-stroke:0.25px #000;">SELLO FIEL COPIA DEL ORIGINAL</div><div class="t" style="left:492.30px;top:659.00px;font-size:13.4px;color:#000;transform:scaleX(0.9562);transform-origin:0 0;-webkit-text-stroke:0.25px #000;">UNIDAD</div><div class="t" style="right:718.20px;top:659.00px;font-size:13.4px;color:#000;transform:scaleX(0.9977);transform-origin:100% 0;-webkit-text-stroke:0.25px #000;">1</div><div class="t" style="right:638.20px;top:659.00px;font-size:13.4px;color:#000;transform:scaleX(0.9956);transform-origin:100% 0;-webkit-text-stroke:0.25px #000;">42,8</div><div class="t" style="right:558.20px;top:659.00px;font-size:13.4px;color:#000;transform:scaleX(0.9956);transform-origin:100% 0;-webkit-text-stroke:0.25px #000;">42,8</div><div class="t" style="right:464.20px;top:659.00px;font-size:13.4px;color:#000;transform:scaleX(0.9977);transform-origin:100% 0;-webkit-text-stroke:0.25px #000;">0</div><div class="t" style="right:370.20px;top:659.00px;font-size:13.4px;color:#000;transform:scaleX(0.9977);transform-origin:100% 0;-webkit-text-stroke:0.25px #000;">1</div><div class="r" style="left:98px;top:354px;width:1px;height:312px;background:#8ea9db;"></div><div class="r" style="left:997px;top:354px;width:1px;height:312px;background:#8ea9db;"></div><div class="r" style="left:905px;top:377px;width:16px;height:16px;border-radius:50%;background:#dc5232"></div><div class="r" style="left:194px;top:373px;width:297px;height:23px;border:2px solid #1e7145;box-sizing:border-box;"></div><div class="r" style="left:196px;top:375px;width:293px;height:19px;border:1px solid #fff;box-sizing:border-box;"></div><div class="r" style="left:486px;top:391px;width:7px;height:7px;background:#fff;"></div><div class="r" style="left:487px;top:392px;width:5px;height:5px;background:#1e7145;"></div><div class="r" style="left:1344px;top:219px;width:21px;height:458px;background:#4b524c;"></div><div class="r" style="left:0px;top:666px;width:1365px;height:11px;background:#4b524c;"></div><div class="r" style="left:100px;top:666px;width:100px;height:11px;background:#fff;"></div><div class="r" style="left:0px;top:666px;width:116px;height:11px;background:#4b524c;border-top-right-radius:8px;"></div><div class="t" style="left:152.00px;top:673.00px;font-size:13.4px;font-weight:bold;color:#222;transform:translateX(-50%) scaleX(0.8688);transform-origin:50% 0;">KARDEX</div><div class="r" style="left:185px;top:666px;width:1180px;height:11px;background:#4b524c;border-top-left-radius:8px;"></div><div class="r" style="left:189px;top:671px;width:1px;height:6px;background:#8a8a8a;"></div><div class="r" style="left:277px;top:671px;width:1px;height:6px;background:#8a8a8a;"></div><div class="r" style="left:349px;top:671px;width:1px;height:6px;background:#8a8a8a;"></div><div class="r" style="left:397px;top:675px;width:1px;height:2px;background:#8a8a8a;"></div><div class="r" style="left:839px;top:673px;width:506px;height:4px;background:#3d3d3d;border-radius:7px 7px 0 0;"></div><div class="r" style="left:1347px;top:219px;width:17px;height:450px;background:#3d3d3d;border-radius:8.5px;"></div><svg class="r" style="left:1350px;top:224px" width="11" height="8" viewBox="0 0 11 8"><path d="M5.5 0.5L10.5 7.5H0.5z" fill="#cfcfcf"/></svg><div class="r" style="left:1351px;top:236px;width:9px;height:150px;background:#c6c6c6;border-radius:4.5px;"></div><svg class="r" style="left:1350px;top:657px" width="11" height="8" viewBox="0 0 11 8"><path d="M5.5 7.5L10.5 0.5H0.5z" fill="#cfcfcf"/></svg>
</body></html>
